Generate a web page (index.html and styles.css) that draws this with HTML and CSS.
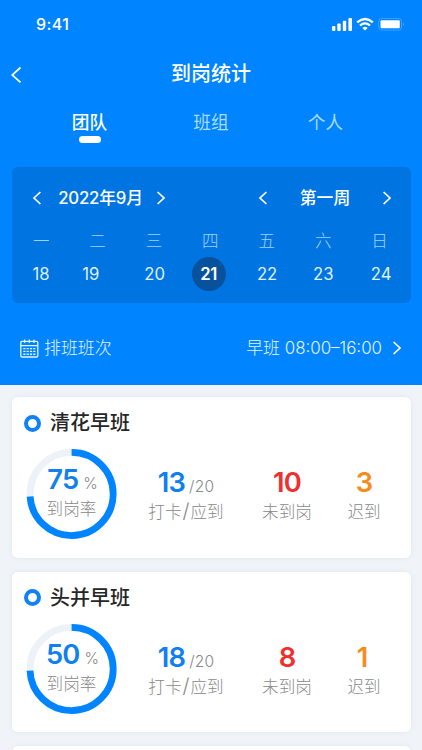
FILE: index.html
```html
<!DOCTYPE html>
<html lang="zh-CN">
<head>
<meta charset="utf-8">
<title>到岗统计</title>
<link rel="stylesheet" href="styles.css">
</head>
<body>
<div class="screen">
  <header class="top">
    <div class="status">
      <span class="time">9:41</span>
      <svg class="status-icons" width="74" height="16" viewBox="0 0 74 16">
        <g fill="#fff">
          <rect x="0" y="10" width="3.4" height="5" rx="1"/>
          <rect x="5.3" y="7.5" width="3.4" height="7.5" rx="1"/>
          <rect x="10.8" y="4.7" width="3.4" height="10.3" rx="1"/>
          <rect x="16.4" y="2" width="3.6" height="13" rx="1"/>
          <path d="M33 14.5 30.4 11.9Q33 9.8 35.6 11.9Z"/>
          <rect x="48.5" y="4.3" width="19.3" height="8" rx="1"/>
        </g>
        <path d="M25.2 6.4Q33-.4 40.8 6.4M28 9.5Q33 5.2 38 9.5" fill="none" stroke="#fff" stroke-width="2.3"/>
        <rect x="46.7" y="2.5" width="22.8" height="11.6" rx="2.8" fill="none" stroke="#fff" stroke-opacity=".26" stroke-width=".9"/>
        <path d="M71 6.5q1.6 1.8 0 3.7z" fill="#fff" opacity=".45"/>
      </svg>
    </div>
    <div class="navbar">
      <svg class="back" width="12" height="18" viewBox="0 0 12 18"><path d="M10.5 1.5 2.2 9l8.3 7.3"/></svg>
      <h1>到岗统计</h1>
    </div>
    <nav class="tabs">
      <span class="tab active">团队</span>
      <span class="tab">班组</span>
      <span class="tab">个人</span>
    </nav>
    <section class="calendar">
      <div class="pickers">
        <div class="picker month">
          <svg width="10" height="14" viewBox="0 0 10 14"><path d="M8.4 1 2 7l6.4 6"/></svg>
          <b>2022年9月</b>
          <svg width="10" height="14" viewBox="0 0 10 14"><path d="M1.6 1 8 7l-6.4 6"/></svg>
        </div>
        <div class="picker week">
          <svg width="10" height="14" viewBox="0 0 10 14"><path d="M8.4 1 2 7l6.4 6"/></svg>
          <b>第一周</b>
          <svg width="10" height="14" viewBox="0 0 10 14"><path d="M1.6 1 8 7l-6.4 6"/></svg>
        </div>
      </div>
      <div class="days names"><span>一</span><span>二</span><span>三</span><span>四</span><span>五</span><span>六</span><span>日</span></div>
      <div class="days dates"><span>18</span><span class="early">19</span><span class="late-day">20</span><span class="today"><i>21</i></span><span class="late-day">22</span><span class="late-day">23</span><span class="last">24</span></div>
    </section>
    <div class="shift">
      <svg class="cal-icon" width="19" height="19" viewBox="0 0 19 19" fill="none" stroke="#e5f4ff">
        <rect x=".8" y="2.3" width="17" height="15.7" rx="1.2" stroke-width="1.3"/>
        <path d="M1 6.6h17M4.7.5v3.6M9.3.5v3.6M14 .5v3.6" stroke-width="1.2"/>
        <path d="M3.3 9.6h13M3.3 12.4h13M3.3 15.2h13" stroke-width="1.4" stroke-dasharray="2.2 1.1"/>
      </svg>
      <span class="shift-label">排班班次</span>
      <span class="shift-value">早班 08:00–16:00</span>
      <svg width="10" height="14" viewBox="0 0 10 14"><path d="M1.6 1 8 7l-6.4 6"/></svg>
    </div>
  </header>
  <main class="list">
    <article class="card">
      <h2><i class="dot"></i>清花早班</h2>
      <div class="stats">
        <div class="ring">
          <svg width="90" height="90" viewBox="0 0 90 90"><circle class="track" cx="44.6" cy="45" r="41.6"/><circle class="arc" cx="44.6" cy="45" r="41.6" pathLength="100" stroke-dasharray="74 26"/></svg>
          <div class="ring-text"><p class="rate"><b>75</b><small>%</small></p><p class="caption">到岗率</p></div>
        </div>
        <div class="stat checked"><p class="num"><b>13</b><small>/20</small></p><p class="caption">打卡<i>/</i>应到</p></div>
        <div class="stat absent"><p class="num"><b>10</b></p><p class="caption">未到岗</p></div>
        <div class="stat late"><p class="num"><b>3</b></p><p class="caption">迟到</p></div>
      </div>
    </article>
    <article class="card">
      <h2><i class="dot"></i>头并早班</h2>
      <div class="stats">
        <div class="ring">
          <svg width="90" height="90" viewBox="0 0 90 90"><circle class="track" cx="44.6" cy="45" r="41.6"/><circle class="arc" cx="44.6" cy="45" r="41.6" pathLength="100" stroke-dasharray="74.4 25.6"/></svg>
          <div class="ring-text"><p class="rate"><b>50</b><small>%</small></p><p class="caption">到岗率</p></div>
        </div>
        <div class="stat checked"><p class="num"><b>18</b><small>/20</small></p><p class="caption">打卡<i>/</i>应到</p></div>
        <div class="stat absent"><p class="num"><b>8</b></p><p class="caption">未到岗</p></div>
        <div class="stat late"><p class="num one"><b>1</b></p><p class="caption">迟到</p></div>
      </div>
    </article>
    <article class="card"></article>
  </main>
</div>
</body>
</html>
```
FILE: styles.css
```css
* { box-sizing: border-box; margin: 0; padding: 0; }
body { font-family: Inter, "Noto Sans CJK SC", sans-serif; }
i { font-style: normal; }
.screen { width: 422px; height: 750px; overflow: hidden; background: #f0f4f8; }
.top { height: 385px; background: #0084ff; color: #fff; }
.top svg { flex: none; }
.status { height: 48px; padding: 16px 16px 0 36px; display: flex; justify-content: space-between; }
.time { font-size: 16px; line-height: 17px; font-weight: 500; letter-spacing: .4px; }
.navbar { height: 50px; display: grid; grid-template-columns: 60px 1fr 60px; align-items: center; padding-left: 10px; padding-right: 10px; }
.navbar svg { margin-top: 4px; }
h1 { height: 50px; padding-top: 1px; font-size: 20px; line-height: 50px; font-weight: 500; text-align: center; }
.back path, .picker path, .shift > svg:last-child path { fill: none; stroke: #fff; stroke-width: 1.7; }
.tabs { height: 69px; display: grid; grid-template-columns: 114px 122px 114px; justify-content: center; padding-top: 11px; }
.tab { font-size: 17.7px; line-height: 28px; text-align: center; color: #a9dcff; }
.tab:first-child { margin-right: 7px; }
.tab:last-child { margin-right: 7px; }
.active { color: #fff; font-weight: 500; }
.active::after { content: ""; display: block; width: 22px; height: 7px; border-radius: 4px; background: #fff; margin: -1px auto 0; }
.calendar { margin: 0 11px 0 12px; height: 136px; border-radius: 6px; background: #0075e2; }
.pickers { height: 57px; padding: 6px 19px 0 20px; display: flex; justify-content: space-between; }
.picker { height: 50px; display: flex; align-items: center; justify-content: space-between; }
.month { width: 134px; }
.week { width: 134px; }
.picker b { font-size: 16.8px; font-weight: 500; line-height: 24px; }
.month b { letter-spacing: -.2px; margin-left: 3px; }
.days { display: grid; grid-template-columns: repeat(7, 56.2px); width: 394px; margin-left: 1px; text-align: center; }
.names { font-size: 16.5px; line-height: 32px; color: #a0d2ff; font-weight: 300; padding-top: 1px; margin-bottom: -1px; }
.names { width: 396px; grid-template-columns: repeat(7, 56.4px); }
.dates { font-size: 16.7px; line-height: 34px; color: #dff0ff; margin-top: 1px; }
.early { padding-right: 13px; }
.late-day { padding-left: 2.5px; }
.last { padding-left: 6px; }
.today i { display: block; width: 34px; height: 34px; margin: 0 auto 0 10px; border-radius: 50%; background: #08519c; color: #fff; font-weight: 600; letter-spacing: -.3px; }
.shift { height: 90px; padding: 0 20px; display: flex; align-items: center; color: #e6f5ff; font-size: 16.9px; }
.shift-label, .shift-value { line-height: 24px; font-weight: 300; }
.shift-label { margin-left: 5px; }
.shift-value { margin-left: auto; margin-right: 10px; }
.list { padding: 12px 11px 0 12px; display: flex; flex-direction: column; gap: 14px; }
.card { height: 160.5px; flex: none; border-radius: 6px; background: #fff; box-shadow: 0 0 5px rgba(130,150,170,.13); }
h2 { display: flex; align-items: center; height: 52px; padding-left: 12px; font-size: 20px; line-height: 28px; font-weight: 500; color: #262626; }
.dot { width: 17px; height: 17px; border: 4.5px solid #1281f5; border-radius: 50%; margin-right: 9px; }
.stats { display: flex; }
.ring { width: 90px; height: 90px; margin-left: 14.5px; display: grid; }
.ring > * { grid-area: 1 / 1; }
.ring svg { overflow: visible; }
.ring circle { fill: none; stroke-width: 6.8; transform: rotate(-90deg); transform-origin: 44.6px 45px; }
.track { stroke: #ecf2f8; }
.arc { stroke: #0084ff; }
.ring-text { padding-top: 14px; text-align: center; }
.rate { display: flex; justify-content: center; align-items: baseline; gap: 5px; height: 34px; line-height: 34px; padding-left: 2px; }
.caption { font-size: 16.6px; line-height: 24px; color: #888; font-weight: 300; white-space: nowrap; }
.caption i { margin: 0 1px; font-size: 20px; line-height: 20px; }
b { font-weight: 600; }
.rate b, .num b { font-size: 27.3px; letter-spacing: -.8px; color: #117ff0; }
small { font-size: 15.5px; color: #888; font-weight: 300; }
.stat { padding-top: 16px; text-align: center; }
.num { height: 35px; line-height: 35px; }
.num small { margin-left: 4px; letter-spacing: .2px; }
.one { padding-right: 4px; }
.checked { width: 80px; margin-left: 29.5px; }
.absent { width: 60px; margin-left: 31px; }
.late { width: 44px; margin-left: 25px; }
.absent b { color: #ef302f; }
.late b { color: #f78c1e; }
```
